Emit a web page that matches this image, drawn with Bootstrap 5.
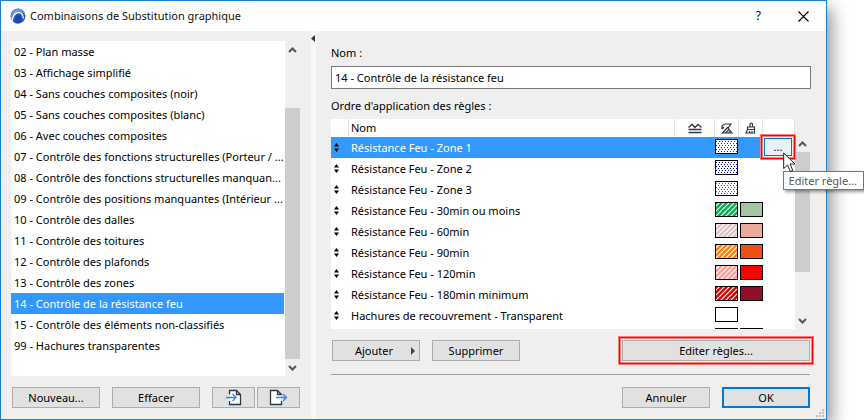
<!DOCTYPE html>
<html lang="fr">
<head>
<meta charset="utf-8">
<meta name="viewport" content="width=device-width, initial-scale=1">
<title>Combinaisons de Substitution graphique</title>
<link href="https://cdn.jsdelivr.net/npm/bootstrap@5.3.0/dist/css/bootstrap.min.css" rel="stylesheet">
<style>
body { font: 11px/20px "Noto Sans", "Open Sans", sans-serif; color: #000; background: #fff; overflow: hidden; }
svg { display: block; }
.dialog { margin-right: 37px; background: #efefef; border: 1px solid #1a82d6; box-shadow: 5px 8px 16px rgba(0,0,0,.42); }
.titlebar { height: 30px; padding: 0 17px 0 9px; background: #fff; }
.titlebar h1 { font-size: 11px; line-height: 28px; font-weight: 400; color: #111; }
.tbtn { border: 0; background: none; padding: 0; color: #000; }
.tbtn-help { font-size: 12px; margin-right: 37px; }
.side { width: 310px; padding: 10px 11px 11px 10px; }
.splitter { width: 5px; flex: none; background: #f8f8f8; }
.splitter svg { margin-top: 4px; }
.main-pane { padding: 12px 15px 11px; min-width: 0; }
.combos { background: #fff; min-height: 335px; padding-right: 1px; min-width: 0; }
.combos .list-group-item { height: 21px; line-height: 21px; padding: 0 0 0 3px; border: 0; color: #000; font-size: 11px; white-space: nowrap; overflow: hidden; background: #fff; }
.combos .list-group-item.active { background: #39f; color: #fff; margin: 0; }
.sbar { width: 15px; flex: none; }
.sbar svg { flex: none; }
.thumb { background: #cdcdcd; }
.thumb-side { margin-top: 50px; flex: 1; }
.thumb-rules { height: 120px; }
.dbtn { width: 88px; height: 21px; padding: 0; font-size: 11px; line-height: 19px; color: #000; background: #e1e1e1; border: 1px solid #adadad; border-radius: 0; flex: none; }
.dbtn:hover { background: #e5f1fb; border-color: #0078d7; color: #000; }
.dbtn-icon { width: 43px; }
.dbtn-wide { width: 188px; }
.dbtn-ok { border: 2px solid #0078d7; line-height: 17px; }
.ring { box-shadow: 0 0 0 1px #f4f0f0, 0 0 0 2px #ff7c7c, 0 0 0 3px #f00, 0 0 0 4px #ff7c7c; }
.field-label { line-height: 20px; margin-bottom: 3px; }
.name-field { height: 23px; margin-bottom: 7px; padding: 0 3px; font-size: 11px; color: #000; border: 1px solid #7a7a7a; border-radius: 0; box-shadow: none; }
.rules-box { height: 210px; padding-right: 1px; }
.rules-view { background: #fff; overflow-y: clip; overflow-x: visible; min-width: 0; position: relative; z-index: 1; }
.rules { width: 100%; table-layout: fixed; border-collapse: separate; border-spacing: 0; }
.rules th { height: 18px; line-height: 18px; font-weight: 400; padding: 0; border-right: 1px solid #e3e3e3; }
.rules td { height: 21px; line-height: 21px; padding: 0; vertical-align: top; white-space: nowrap; }
.rules td.cell-name, .rules th.cell-name { padding-left: 2px; }
.rules tr.picked td { background: #39f; color: #fff; }
.rules .glyph svg { margin: 0 auto; }
.rules td svg { margin-top: 2px; }
.rules td .swatch-b { margin-left: 1px; }
.rules td .handle { margin: 6px 0 0 3px; }
.more { width: 28px; height: 18px; margin: 1px 0 0 1px; padding: 0; line-height: 12px; background: #e5f1fb; border: 1px solid #0078d7; display: block; position: relative; color: #102; }
.rule-line { height: 1px; margin: 13px 1px 12px 0; background: #a0a0a0; opacity: 1; border: 0; }
.tools { padding-top: 11px; }
.side-tools { padding-left: 1px; }
.side-tools .export { margin-left: 2px; }
.pane-tools { padding: 11px 1px 0; }
.answers { padding-right: 1px; }
.hint { position: absolute; right: -53px; top: 52px; height: 19px; padding: 0 6px 0 5px; line-height: 17px; white-space: nowrap; background: #fff; border: 1px solid #767676; color: #575757; box-shadow: 2px 2px 3px rgba(0,0,0,.4); z-index: 5; }
.pointer { position: absolute; right: 15px; top: 33px; z-index: 6; }
.grip { position: absolute; right: 2px; bottom: 2px; }
</style>
<script src="https://cdn.jsdelivr.net/npm/bootstrap@5.3.0/dist/js/bootstrap.bundle.min.js"></script>
</head>
<body>
<svg width="0" height="0" class="position-absolute" aria-hidden="true">
  <defs>
    <pattern id="hatch" width="5" height="5" patternUnits="userSpaceOnUse"><path d="M-1 6L6-1M-1 1L1-1M4 6L6 4" stroke="#fff" stroke-width="1.1"/></pattern>
    <pattern id="dotR" width="3" height="4" patternUnits="userSpaceOnUse"><path d="M0 0h1v1H0zM1 2h1v1H1z" fill="#d00000"/></pattern>
    <pattern id="dotB" width="3" height="4" patternUnits="userSpaceOnUse"><path d="M0 0h1v1H0zM1 2h1v1H1z" fill="#0000d8"/></pattern>
    <pattern id="dotG" width="3" height="4" patternUnits="userSpaceOnUse"><path d="M0 0h1v1H0zM1 2h1v1H1z" fill="#009a20"/></pattern>
    <symbol id="updown" viewBox="0 0 5 9"><path d="M0 3.5L2.5 0 5 3.5zM0 5.5h5L2.5 9z"/></symbol>
    <symbol id="up" viewBox="0 0 15 17"><path d="M4 11l3.500-3.500L11 11" fill="none" stroke="#555" stroke-width="2"/></symbol>
    <symbol id="down" viewBox="0 0 15 17"><path d="M4 7l3.500 3.500L11 7" fill="none" stroke="#555" stroke-width="2"/></symbol>
  </defs>
</svg>

<div class="dialog d-flex flex-column min-vh-100 position-relative">
  <header class="titlebar d-flex align-items-center">
    <svg width="16" height="16" viewBox="0 0 16 16" aria-hidden="true">
      <circle cx="8" cy="8" r="7.500" fill="#2d59bd"/>
      <path d="M1 11C0 3 6 0 10 1c3 .5 5 3 5 6-2-4-7-5-10-1-1.500 2-2.500 4-2.500 6z" fill="#6f97e4"/>
      <path d="M2 13C3 7.500 6 4.500 9 4.500c3 0 4 2.500 4.500 6" fill="none" stroke="#fff" stroke-width="1.300"/>
      <path d="M4.500 15C5 10 7 7 9 7s2.500 3 2.500 7C9 16 7 15.500 4.500 15z" fill="#1c47a8"/>
    </svg>
    <h1 class="mb-0 ms-1 flex-grow-1">Combinaisons de Substitution graphique</h1>
    <button class="tbtn tbtn-help" type="button" aria-label="Aide">?</button>
    <button class="tbtn" type="button" aria-label="Fermer"><svg width="11" height="11" viewBox="0 0 11 11"><path d="M.5.5l10 10M10.500.5l-10 10" stroke="#000" stroke-width="1.100"/></svg></button>
  </header>

  <div class="d-flex flex-grow-1">
    <aside class="side d-flex flex-column flex-shrink-0">
      <div class="d-flex flex-grow-1">
        <div class="combos list-group list-group-flush rounded-0 flex-grow-1">
          <button type="button" class="list-group-item list-group-item-action">02 - Plan masse</button>
          <button type="button" class="list-group-item list-group-item-action">03 - Affichage simplifié</button>
          <button type="button" class="list-group-item list-group-item-action">04 - Sans couches composites (noir)</button>
          <button type="button" class="list-group-item list-group-item-action">05 - Sans couches composites (blanc)</button>
          <button type="button" class="list-group-item list-group-item-action">06 - Avec couches composites</button>
          <button type="button" class="list-group-item list-group-item-action">07 - Contrôle des fonctions structurelles (Porteur / ...</button>
          <button type="button" class="list-group-item list-group-item-action">08 - Contrôle des fonctions structurelles manquan...</button>
          <button type="button" class="list-group-item list-group-item-action">09 - Contrôle des positions manquantes (Intérieur ...</button>
          <button type="button" class="list-group-item list-group-item-action">10 - Contrôle des dalles</button>
          <button type="button" class="list-group-item list-group-item-action">11 - Contrôle des toitures</button>
          <button type="button" class="list-group-item list-group-item-action">12 - Contrôle des plafonds</button>
          <button type="button" class="list-group-item list-group-item-action">13 - Contrôle des zones</button>
          <button type="button" class="list-group-item list-group-item-action active" aria-current="true">14 - Contrôle de la résistance feu</button>
          <button type="button" class="list-group-item list-group-item-action">15 - Contrôle des éléments non-classifiés</button>
          <button type="button" class="list-group-item list-group-item-action">99 - Hachures transparentes</button>
        </div>
        <div class="sbar d-flex flex-column">
          <svg width="15" height="17"><use href="#up"/></svg>
          <div class="thumb thumb-side"></div>
          <svg width="15" height="17"><use href="#down"/></svg>
        </div>
      </div>
      <div class="tools side-tools d-flex">
        <button type="button" class="btn dbtn me-2">Nouveau...</button>
        <button type="button" class="btn dbtn ms-1">Effacer</button>
        <button type="button" class="btn dbtn dbtn-icon ms-auto d-flex align-items-center justify-content-center" aria-label="Importer">
          <svg width="17" height="17" viewBox="0 0 17 17" fill="none"><path d="M4.500 6V1.500h7l4 4v10h-11V12" fill="#fff"/><path d="M4.500 5.500v-4h7l4 4v10h-11V12M11.500 1.500v4h4" stroke="#2d3a45" stroke-width="1.300"/><path d="M1 8.500h9M7.500 5L11 8.500 7.500 12" stroke="#3385ff" stroke-width="1.400"/></svg>
        </button>
        <button type="button" class="btn dbtn dbtn-icon d-flex align-items-center justify-content-center export" aria-label="Exporter">
          <svg width="19" height="17" viewBox="0 0 19 17" fill="none"><path d="M2 1.500h6l4 4v10H2z" fill="#fff"/><path d="M12.500 6v-.5l-4-4H1.500v14h11V12M8.500 1.500v4h4" stroke="#2d3a45" stroke-width="1.300"/><path d="M7 8.500h10M14 5l3.500 3.500L14 12" stroke="#3385ff" stroke-width="1.400"/></svg>
        </button>
      </div>
    </aside>

    <div class="splitter"><svg width="5" height="7" viewBox="0 0 5 7"><path d="M4 0v7L0 3.500z" fill="#333"/></svg></div>

    <main class="main-pane flex-grow-1 d-flex flex-column">
      <label class="field-label" for="nom">Nom :</label>
      <input id="nom" class="form-control name-field" type="text" value="14 - Contrôle de la résistance feu">
      <div class="field-label" id="ordre">Ordre d'application des règles :</div>

      <div class="rules-box d-flex position-relative">
        <div class="rules-view flex-grow-1">
          <table class="rules" aria-labelledby="ordre">
            <colgroup><col style="width:18px"><col><col style="width:40px"><col style="width:24px"><col style="width:24px"><col style="width:32px"></colgroup>
            <thead>
              <tr>
                <th></th><th class="cell-name">Nom</th>
                <th class="glyph"><svg width="14" height="11" viewBox="0 0 14 11" fill="none" stroke="#2d3a45" stroke-width="1.300"><path d="M.5 4.500L4 1.500l3 3 3-3 3.500 3M.5 6.500h13M.5 9.500h13"/></svg></th>
                <th class="glyph"><svg width="12" height="11" viewBox="0 0 12 11" fill="none" stroke="#2d3a45" stroke-width="1.200"><path d="M1 6C.5 3 2 1 4.500 1H10L7 5l4 5H1.500L7 4M4.500 10l3.500-3.500M7.500 10L9 8.500M1 6l2-2"/></svg></th>
                <th class="glyph"><svg width="11" height="12" viewBox="0 0 11 12" fill="none" stroke="#2d3a45" stroke-width="1.200"><path d="M5 5V2.500C5 .5 7.500.5 7.500 2.500V5M2.500 5h7v2.500h-7zM2.500 7.500L1 11h8.500V7.500M4.500 9v2M7 9v2"/></svg></th>
                <th></th>
              </tr>
            </thead>
            <tbody>
              <tr class="picked">
                <td><svg class="handle" width="5" height="9"><use href="#updown"/></svg></td><td class="cell-name">Résistance Feu - Zone 1</td><td></td>
                <td><svg width="23" height="15"><rect x=".5" y=".5" width="22" height="14" fill="#fff"/><rect x=".5" y=".5" width="22" height="14" fill="url(#dotR)" stroke="#000"/></svg></td><td></td>
                <td><button type="button" class="more ring" aria-describedby="hint">...</button></td>
              </tr>
              <tr>
                <td><svg class="handle" width="5" height="9"><use href="#updown"/></svg></td><td class="cell-name">Résistance Feu - Zone 2</td><td></td>
                <td><svg width="23" height="15"><rect x=".5" y=".5" width="22" height="14" fill="url(#dotB)" stroke="#000"/></svg></td><td></td><td></td>
              </tr>
              <tr>
                <td><svg class="handle" width="5" height="9"><use href="#updown"/></svg></td><td class="cell-name">Résistance Feu - Zone 3</td><td></td>
                <td><svg width="23" height="15"><rect x=".5" y=".5" width="22" height="14" fill="url(#dotG)" stroke="#000"/></svg></td><td></td><td></td>
              </tr>
              <tr>
                <td><svg class="handle" width="5" height="9"><use href="#updown"/></svg></td><td class="cell-name">Résistance Feu - 30min ou moins</td><td></td>
                <td><svg width="23" height="15"><rect width="23" height="15" fill="#00b050"/><rect x=".5" y=".5" width="22" height="14" fill="url(#hatch)" stroke="#000"/></svg></td>
                <td><svg class="swatch-b" width="23" height="15"><rect x=".5" y=".5" width="22" height="14" fill="#a5c5a5" stroke="#000"/></svg></td><td></td>
              </tr>
              <tr>
                <td><svg class="handle" width="5" height="9"><use href="#updown"/></svg></td><td class="cell-name">Résistance Feu - 60min</td><td></td>
                <td><svg width="23" height="15"><rect width="23" height="15" fill="#dcc4c4"/><rect x=".5" y=".5" width="22" height="14" fill="url(#hatch)" stroke="#000"/></svg></td>
                <td><svg class="swatch-b" width="23" height="15"><rect x=".5" y=".5" width="22" height="14" fill="#e9ac9a" stroke="#000"/></svg></td><td></td>
              </tr>
              <tr>
                <td><svg class="handle" width="5" height="9"><use href="#updown"/></svg></td><td class="cell-name">Résistance Feu - 90min</td><td></td>
                <td><svg width="23" height="15"><rect width="23" height="15" fill="#ff8000"/><rect x=".5" y=".5" width="22" height="14" fill="url(#hatch)" stroke="#000"/></svg></td>
                <td><svg class="swatch-b" width="23" height="15"><rect x=".5" y=".5" width="22" height="14" fill="#ec5012" stroke="#000"/></svg></td><td></td>
              </tr>
              <tr>
                <td><svg class="handle" width="5" height="9"><use href="#updown"/></svg></td><td class="cell-name">Résistance Feu - 120min</td><td></td>
                <td><svg width="23" height="15"><rect width="23" height="15" fill="#ff9c9c"/><rect x=".5" y=".5" width="22" height="14" fill="url(#hatch)" stroke="#000"/></svg></td>
                <td><svg class="swatch-b" width="23" height="15"><rect x=".5" y=".5" width="22" height="14" fill="#fb0000" stroke="#000"/></svg></td><td></td>
              </tr>
              <tr>
                <td><svg class="handle" width="5" height="9"><use href="#updown"/></svg></td><td class="cell-name">Résistance Feu - 180min minimum</td><td></td>
                <td><svg width="23" height="15"><rect width="23" height="15" fill="#d80000"/><rect x=".5" y=".5" width="22" height="14" fill="url(#hatch)" stroke="#000"/></svg></td>
                <td><svg class="swatch-b" width="23" height="15"><rect x=".5" y=".5" width="22" height="14" fill="#910f2c" stroke="#000"/></svg></td><td></td>
              </tr>
              <tr>
                <td><svg class="handle" width="5" height="9"><use href="#updown"/></svg></td><td class="cell-name">Hachures de recouvrement - Transparent</td><td></td>
                <td><svg width="23" height="15"><rect x=".5" y=".5" width="22" height="14" fill="#fff" stroke="#000"/></svg></td><td></td><td></td>
              </tr>
              <tr>
                <td></td><td></td><td></td>
                <td><svg width="23" height="15"><rect x=".5" y=".5" width="22" height="14" fill="#fff" stroke="#000"/></svg></td>
                <td><svg class="swatch-b" width="23" height="15"><rect x=".5" y=".5" width="22" height="14" fill="#fff" stroke="#000"/></svg></td><td></td>
              </tr>
            </tbody>
          </table>
        </div>
        <div class="sbar d-flex flex-column pt-3">
          <svg width="15" height="17"><use href="#up"/></svg>
          <div class="thumb thumb-rules"></div>
          <svg class="mt-auto" width="15" height="17"><use href="#down"/></svg>
        </div>
        <div class="hint" id="hint" role="tooltip">Editer règle...</div>
        <svg class="pointer" width="13" height="21" viewBox="0 0 13 21"><path d="M.7 1v15.500l3.800-3.500 2.800 6.500 2.500-1.100L7 12h5z" fill="#fff" stroke="#222"/></svg>
      </div>

      <div class="pane-tools d-flex">
        <button type="button" class="btn dbtn me-2 d-flex align-items-center"><span class="flex-grow-1 ps-1">Ajouter</span><svg class="me-1" width="4" height="8" viewBox="0 0 4 8"><path d="M0 0l4 4-4 4z" fill="#444"/></svg></button>
        <button type="button" class="btn dbtn ms-1">Supprimer</button>
        <button type="button" class="btn dbtn dbtn-wide ring ms-auto">Editer règles...</button>
      </div>
      <hr class="rule-line">
      <div class="answers d-flex justify-content-end mt-auto">
        <button type="button" class="btn dbtn me-2">Annuler</button>
        <button type="button" class="btn dbtn dbtn-ok ms-1">OK</button>
      </div>
    </main>
  </div>
  <svg class="grip" width="8" height="8" viewBox="0 0 8 8"><path d="M6 0h2v2H6zM3 3h2v2H3zM6 3h2v2H6zM0 6h2v2H0zM3 6h2v2H3zM6 6h2v2H6z" fill="#bfbfbf"/></svg>
</div>
</body>
</html>
